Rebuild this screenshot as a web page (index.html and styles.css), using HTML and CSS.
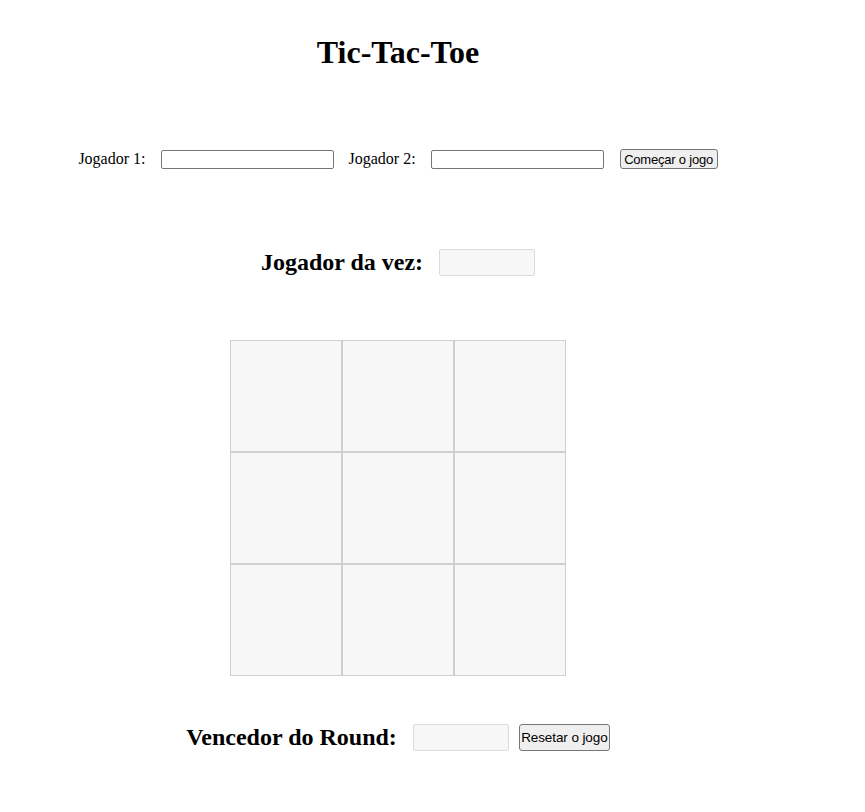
FILE: index.html
```html
<!DOCTYPE html>
<html lang="pt">
<head>
<meta charset="utf-8">
<title>Tic-Tac-Toe</title>
<link rel="stylesheet" href="styles.css">
</head>
<body>
<main class="app">
  <h1 class="title">Tic-Tac-Toe</h1>
  <div class="players">
    <label class="label" for="p1">Jogador 1:</label>
    <input class="text-input" id="p1" type="text">
    <label class="label" for="p2">Jogador 2:</label>
    <input class="text-input" id="p2" type="text">
    <button class="btn btn-start" type="button">Começar o jogo</button>
  </div>
  <div class="turn">
    <h2 class="heading">Jogador da vez:</h2>
    <div class="display"></div>
  </div>
  <div class="board">
    <div class="cell"></div><div class="cell"></div><div class="cell"></div>
    <div class="cell"></div><div class="cell"></div><div class="cell"></div>
    <div class="cell"></div><div class="cell"></div><div class="cell"></div>
  </div>
  <div class="winner">
    <h2 class="heading">Vencedor do Round:</h2>
    <div class="display"></div>
    <button class="btn btn-reset" type="button">Resetar o jogo</button>
  </div>
</main>
</body>
</html>
```
FILE: styles.css
```css
body {
  margin: 8px;
  background: #fff;
  font-family: "Liberation Serif", "Times New Roman", serif;
  color: #000;
}
.app {
  width: 780px;
}
.title {
  margin: 0;
  padding-top: 26px;
  font-size: 32px;
  line-height: 37px;
  font-weight: bold;
  text-align: center;
}
.players {
  margin-top: 77px;
  display: flex;
  justify-content: center;
  align-items: center;
  height: 22px;
  font-size: 16px;
}
.label {
  margin-right: 15px;
}
.text-input {
  box-sizing: border-box;
  width: 173px;
  height: 19px;
  margin: 1px 15px 0 0;
  padding: 1px 2px;
  border: 1px solid #767676;
  border-radius: 2px;
  background: #fff;
}
.btn {
  box-sizing: border-box;
  font-family: "Liberation Sans", Arial, sans-serif;
  font-size: 13px;
  letter-spacing: -0.2px;
  white-space: nowrap;
  color: #000;
  background: #efefef;
  border: 1px solid #767676;
  border-radius: 3px;
  padding: 0;
  margin: 0;
  text-align: center;
}
.btn-start {
  width: 98px;
  height: 20px;
  margin-left: 1px;
}
.turn {
  margin-top: 79px;
  display: flex;
  justify-content: center;
  align-items: center;
  gap: 16px;
  height: 27px;
}
.heading {
  margin: 0;
  font-size: 24px;
  font-weight: bold;
  line-height: 27px;
}
.display {
  box-sizing: border-box;
  width: 96px;
  height: 27px;
  background: #f7f7f7;
  border: 1px solid #dcdcdc;
  border-radius: 2px;
}
.board {
  margin: 64px auto 0;
  width: 336px;
  display: grid;
  grid-template-columns: repeat(3, 112px);
  grid-auto-rows: 112px;
}
.cell {
  box-sizing: border-box;
  background: #f7f7f7;
  border: 1px solid #cfcfcf;
}
.winner {
  margin-top: 48px;
  display: flex;
  justify-content: center;
  align-items: center;
  height: 27px;
}
.winner .heading {
  margin-right: 16px;
}
.btn-reset {
  width: 91px;
  height: 27px;
  margin-left: 10px;
  font-size: 13.5px;
  letter-spacing: -0.1px;
}
```
